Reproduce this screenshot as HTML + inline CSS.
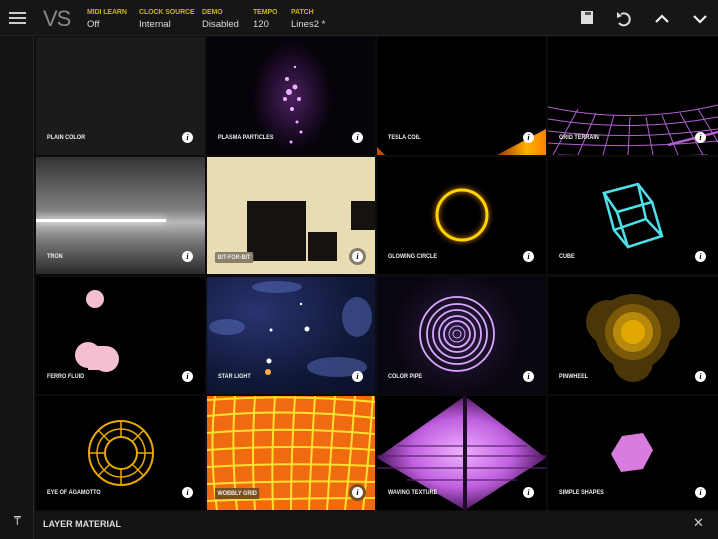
<!DOCTYPE html>
<html><head><meta charset="utf-8"><style>
*{margin:0;padding:0;box-sizing:border-box}
body{width:718px;height:539px;background:#0c0c0c;overflow:hidden;position:relative;font-family:"Liberation Sans",sans-serif}
.top{position:absolute;left:0;top:0;width:718px;height:36px;background:#161616;border-bottom:1px solid #222}
.side{position:absolute;left:0;top:0;width:34px;height:539px;background:#141414;border-right:1px solid #262626}
.lab{position:absolute;top:9px;font-size:7px;font-weight:bold;color:#c8b320;letter-spacing:-.1px}
.val{position:absolute;top:19px;font-size:9.5px;color:#ddd}
.t{position:absolute;overflow:hidden;background:#000}
.t svg{position:absolute;left:0;top:0}
.n{position:absolute;left:11px;bottom:14px;font-family:"Liberation Sans Narrow","Liberation Sans",sans-serif;font-weight:bold;font-size:6.5px;color:#eee;transform:scaleX(.85);transform-origin:left}
.i{position:absolute;right:12px;bottom:12px;width:11px;height:11px;border-radius:50%;background:#fff;color:#000;font:bold 8px/11px "Liberation Serif",serif;text-align:center;font-style:italic}
.bot{position:absolute;left:34px;top:511px;width:684px;height:28px;background:#141414}
</style></head><body>
<div class="side"></div>
<div class="top"></div>
<div style="position:absolute;left:9px;top:12px;width:17px;height:1.5px;background:#ccc;box-shadow:0 5px 0 #ccc,0 10px 0 #ccc"></div>
<div style="position:absolute;left:43px;top:6px;font-size:22px;color:#888;font-weight:300;letter-spacing:-1px">VS</div>
<div class="lab" style="left:87px">MIDI LEARN</div><div class="val" style="left:87px">Off</div>
<div class="lab" style="left:139px">CLOCK SOURCE</div><div class="val" style="left:139px">Internal</div>
<div class="lab" style="left:202px">DEMO</div><div class="val" style="left:202px">Disabled</div>
<div class="lab" style="left:253px">TEMPO</div><div class="val" style="left:253px">120</div>
<div class="lab" style="left:291px">PATCH</div><div class="val" style="left:291px">Lines2 *</div>
<svg style="position:absolute;left:578px;top:9px" width="130" height="20">
<rect x="3" y="2" width="12" height="13" fill="#ddd"/><rect x="7" y="3" width="6" height="3" fill="#555"/>
<path d="M43 5 A6 6 0 1 1 41 14" stroke="#ddd" stroke-width="2" fill="none"/><path d="M39 3 L44 7 L39 9Z" fill="#ddd"/>
<path d="M78 13 L84 7 L90 13" stroke="#eee" stroke-width="2.2" fill="none"/>
<path d="M116 7 L122 13 L128 7" stroke="#eee" stroke-width="2.2" fill="none"/>
</svg>

<!-- row1 -->
<div class="t" style="left:36px;top:37px;width:169px;height:118px;background:#1b1b1b"><div class="n">PLAIN COLOR</div><div class="i">i</div></div>
<div class="t" style="left:207px;top:37px;width:168px;height:118px;background:radial-gradient(ellipse 40px 55px at 85px 60px,#4a2060,#1a0a24 70%,#06030a)">
<svg width="168" height="118"><g fill="#f0b0ff"><circle cx="82" cy="55" r="3"/><circle cx="88" cy="50" r="2.5"/><circle cx="78" cy="62" r="2"/><circle cx="92" cy="62" r="2"/><circle cx="85" cy="72" r="2"/><circle cx="80" cy="42" r="2"/><circle cx="90" cy="85" r="1.5"/><circle cx="94" cy="95" r="1.5"/><circle cx="84" cy="105" r="1.5"/><circle cx="88" cy="30" r="1.2"/></g></svg>
<div class="n">PLASMA PARTICLES</div><div class="i">i</div></div>
<div class="t" style="left:377px;top:37px;width:169px;height:118px">
<svg width="169" height="118"><defs><linearGradient id="tc" x1="0" x2="1"><stop offset="0" stop-color="#a03000"/><stop offset=".6" stop-color="#ffb000"/><stop offset="1" stop-color="#ff8000"/></linearGradient></defs><path d="M120 118 L169 92 L169 118Z" fill="url(#tc)"/><path d="M0 110 L8 118 L0 118Z" fill="#c05000"/></svg>
<div class="n">TESLA COIL</div><div class="i">i</div></div>
<div class="t" style="left:548px;top:37px;width:170px;height:118px">
<svg width="170" height="118" stroke="#b060d0" stroke-width="1" fill="none"><path d="M0 70 Q85 88 170 68 M0 82 Q85 96 170 80 M0 94 Q85 104 170 92 M0 106 Q85 112 170 104 M10 118 Q85 120 160 118"/><path d="M5 118 L30 72 M30 118 L48 76 M55 118 L66 78 M80 118 L82 80 M105 118 L98 80 M130 118 L114 78 M155 118 L132 76 M170 105 L150 72"/><path d="M120 108 L170 95" stroke-width="2.5"/></svg>
<div class="n">GRID TERRAIN</div><div class="i">i</div></div>
<!-- row2 -->
<div class="t" style="left:36px;top:157px;width:169px;height:117px;background:linear-gradient(#333,#808080 45%,#b8b8b8 56%,#777 72%,#2a2a2a)">
<div style="position:absolute;left:0;top:62px;width:130px;height:3px;background:#fff;box-shadow:0 0 8px #fff"></div>
<div class="n">TRON</div><div class="i">i</div></div>
<div class="t" style="left:207px;top:157px;width:168px;height:117px;background:#e8dcb4">
<div style="position:absolute;left:40px;top:44px;width:59px;height:60px;background:#151210"></div>
<div style="position:absolute;left:101px;top:75px;width:29px;height:29px;background:#151210"></div>
<div style="position:absolute;left:144px;top:44px;width:24px;height:29px;background:#151210"></div>
<div class="n" style="background:#8a7d6a;padding:2px 3px;left:8px;bottom:11px;border-radius:2px">BIT-FOR-BIT</div><div class="i" style="box-shadow:0 0 0 3px #8a7d6a">i</div></div>
<div class="t" style="left:377px;top:157px;width:169px;height:117px">
<svg width="169" height="117"><circle cx="85" cy="58" r="25" stroke="#ffd400" stroke-width="3" fill="none" style="filter:drop-shadow(0 0 3px #ff9a00)"/></svg>
<div class="n">GLOWING CIRCLE</div><div class="i">i</div></div>
<div class="t" style="left:548px;top:157px;width:170px;height:117px">
<svg width="170" height="117" stroke="#4ee0e8" stroke-width="2.5" fill="none"><path d="M56 36 L90 27 L104 45 L69 55Z M69 55 L80 90 L114 79 L104 45 M56 36 L66 73 L80 90 M66 73 L98 62 L114 79 M90 27 L98 62"/></svg>
<div class="n">CUBE</div><div class="i">i</div></div>
<!-- row3 -->
<div class="t" style="left:36px;top:277px;width:169px;height:117px">
<svg width="169" height="117" fill="#f4bfd0"><circle cx="59" cy="22" r="9"/><circle cx="52" cy="78" r="13"/><circle cx="70" cy="82" r="13"/><rect x="52" y="69" width="18" height="24"/></svg>
<div class="n">FERRO FLUID</div><div class="i">i</div></div>
<div class="t" style="left:207px;top:277px;width:168px;height:117px;background:radial-gradient(ellipse at 30% 30%,#2a3470,#101838 60%,#0a0f28)">
<svg width="168" height="117"><g fill="#5a70c0" opacity=".5"><ellipse cx="20" cy="50" rx="18" ry="8"/><ellipse cx="130" cy="90" rx="30" ry="10"/><ellipse cx="70" cy="10" rx="25" ry="6"/><ellipse cx="150" cy="40" rx="15" ry="20"/></g><g fill="#fff"><circle cx="100" cy="52" r="2.5"/><circle cx="64" cy="53" r="1.5"/><circle cx="62" cy="84" r="2.5"/><circle cx="94" cy="27" r="1.2"/></g><circle cx="61" cy="95" r="3" fill="#ffb040"/></svg>
<div class="n">STAR LIGHT</div><div class="i">i</div></div>
<div class="t" style="left:377px;top:277px;width:169px;height:117px;background:radial-gradient(circle at 80px 57px,#2a1a40,#0a0610 60%)">
<svg width="169" height="117" stroke="#d8a8ff" fill="none"><g stroke-width="1.8"><circle cx="80" cy="57" r="37"/><circle cx="80" cy="57" r="30"/><circle cx="80" cy="57" r="24"/><circle cx="80" cy="57" r="18"/><circle cx="80" cy="57" r="13"/></g><circle cx="80" cy="57" r="8" stroke-width="1"/><circle cx="80" cy="57" r="4" stroke-width="1"/></svg>
<div class="n">COLOR PIPE</div><div class="i">i</div></div>
<div class="t" style="left:548px;top:277px;width:170px;height:117px">
<svg width="170" height="117"><g fill="#4a3608"><circle cx="85" cy="55" r="38"/><circle cx="60" cy="45" r="22"/><circle cx="110" cy="45" r="22"/><circle cx="85" cy="85" r="20"/></g><circle cx="85" cy="55" r="28" fill="#7a5a08"/><circle cx="85" cy="55" r="20" fill="#b88a0c"/><circle cx="85" cy="55" r="12" fill="#e0a800"/></svg>
<div class="n">PINWHEEL</div><div class="i">i</div></div>
<!-- row4 -->
<div class="t" style="left:36px;top:396px;width:169px;height:114px">
<svg width="169" height="114" stroke="#e8a800" fill="none"><circle cx="85" cy="57" r="32" stroke-width="2"/><circle cx="85" cy="57" r="24" stroke-width="1.5"/><circle cx="85" cy="57" r="16" stroke-width="2"/><path d="M85 25 V41 M85 73 V89 M53 57 H69 M101 57 H117 M62 34 L74 46 M108 34 L96 46 M62 80 L74 68 M108 80 L96 68" stroke-width="1.5"/></svg>
<div class="n">EYE OF AGAMOTTO</div><div class="i">i</div></div>
<div class="t" style="left:207px;top:396px;width:168px;height:114px;background:#f06a10">
<svg width="168" height="114" stroke="#ffe030" stroke-width="2" fill="none"><path d="M0 4 Q84 -2 168 6 M0 20 Q84 12 168 22 M0 37 Q84 30 168 38 M0 54 Q84 48 168 54 M0 71 Q84 66 168 70 M0 88 Q84 84 168 86 M0 105 Q84 102 168 102"/><path d="M8 0 Q2 60 10 114 M28 0 Q24 60 30 114 M48 0 Q44 60 48 114 M68 0 Q64 60 66 114 M88 0 Q84 60 84 114 M108 0 Q104 60 102 114 M128 0 Q124 60 120 114 M148 0 Q144 60 138 114 M166 0 Q162 60 156 114"/></svg>
<div class="n" style="background:#7a5020;padding:2px 3px;left:8px;bottom:11px">WOBBLY GRID</div><div class="i" style="box-shadow:0 0 0 3px #7a5020">i</div></div>
<div class="t" style="left:377px;top:396px;width:169px;height:114px">
<svg width="169" height="114"><defs><radialGradient id="wv" cx=".5" cy=".5" r=".5"><stop offset="0" stop-color="#f0b0ff"/><stop offset=".6" stop-color="#c060e0"/><stop offset="1" stop-color="#501860"/></radialGradient></defs><path d="M0 62 L88 0 L169 62 L88 114Z" fill="url(#wv)"/><g stroke="#5a2070" stroke-width="2" opacity=".6"><path d="M88 0 V114 M0 60 H169 M0 72 H169 M20 50 H150 M30 84 H140"/></g><rect x="86" y="0" width="4" height="114" fill="#200828"/></svg>
<div class="n">WAVING TEXTURE</div><div class="i">i</div></div>
<div class="t" style="left:548px;top:396px;width:170px;height:114px">
<svg width="170" height="114"><path d="M74 40 L95 37 L105 54 L95 73 L73 76 L63 58Z" fill="#d87ce0"/></svg>
<div class="n">SIMPLE SHAPES</div><div class="i">i</div></div>

<div class="bot"></div>
<div style="position:absolute;left:14px;top:516px;color:#ccc;font-size:11px;border-top:1px solid #ccc;line-height:11px">T</div>
<div style="position:absolute;left:43px;top:519px;color:#ddd;font:bold 9px 'Liberation Sans Narrow','Liberation Sans',sans-serif">LAYER MATERIAL</div>
<div style="position:absolute;left:693px;top:515px;color:#ccc;font-size:13px">✕</div>
</body></html>
